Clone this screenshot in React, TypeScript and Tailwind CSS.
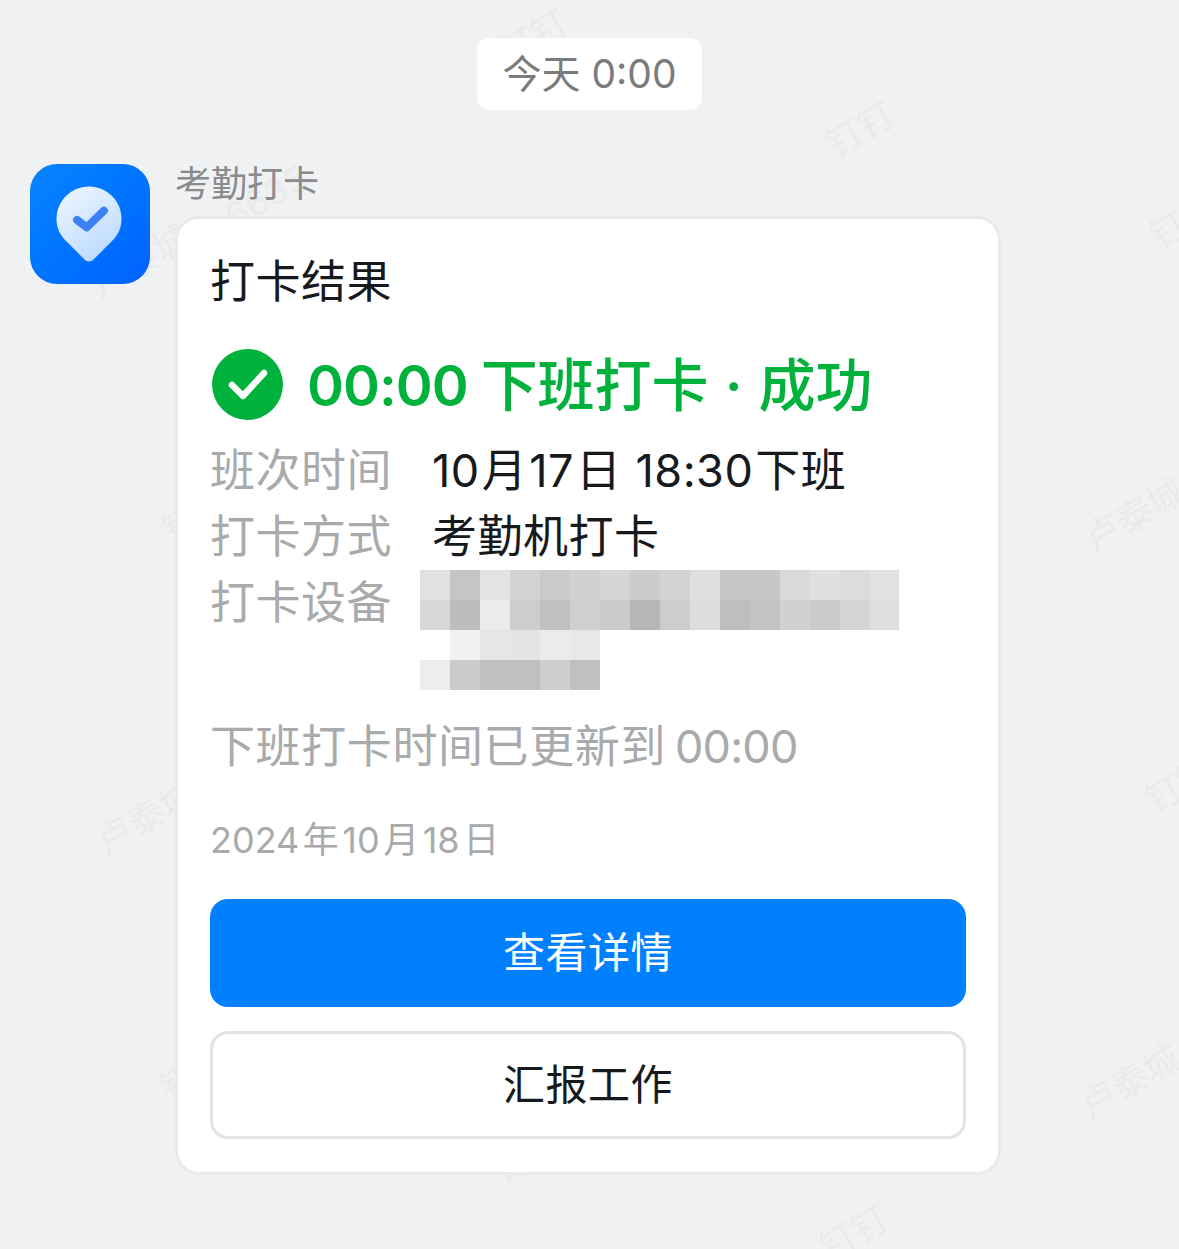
const watermarks = [
  { text: '钉钉', className: 'left-[497px] top-[12px]' },
  { text: '钉钉', className: 'left-[824px] top-[104px]' },
  { text: '钉钉', className: 'left-[1148px] top-[196px]' },
  { text: '卢泰城', className: 'left-[86px] top-[236px]' },
  { text: '6635', className: 'left-[222px] top-[172px]' },
  { text: '钉钉', className: 'left-[160px] top-[490px]' },
  { text: '卢泰城', className: 'left-[1080px] top-[490px]' },
  { text: '钉钉', className: 'left-[1143px] top-[760px]' },
  { text: '卢泰城', className: 'left-[92px] top-[792px]' },
  { text: '钉钉', className: 'left-[158px] top-[1048px]' },
  { text: '卢泰城', className: 'left-[1076px] top-[1056px]' },
  { text: '钉钉', className: 'left-[818px] top-[1208px]' },
  { text: '钉钉', className: 'left-[490px] top-[1130px]' },
];

const blurRows = [
  ['#e1e1e1', '#c4c6c5', '#e3e3e5', '#d3d3d5', '#c9cbc9', '#d1d1d3', '#d6d6d8', '#ccccce', '#d3d3d5', '#dfdfdf', '#c7c7c9', '#c7c7c9', '#d9d9db', '#e0e0e0', '#dbdddb', '#e1e1e3'],
  ['#d8d8da', '#bcbdbf', '#ebebed', '#cdcdcf', '#c0c0c2', '#cfd1d0', '#cbcbcd', '#b5b7b6', '#cdcdcf', '#dcdedd', '#bdbec0', '#c3c3c5', '#d1d1d3', '#cbcbcd', '#d5d5d7', '#dfdfdf'],
  ['#ffffff', '#f0f1f3', '#e5e7e6', '#e4e4e4', '#ebebeb', '#e8e8ea'],
  ['#eceeed', '#cacccb', '#c0c0c2', '#bfc0c2', '#cecece', '#bec0c2'],
];

function AppIcon() {
  return (
    <div className="h-[120px] w-[120px] shrink-0 rounded-[27px] bg-gradient-to-br from-[#0a84ff] to-[#0062ff] flex items-center justify-center">
      <svg width="120" height="120" viewBox="0 0 120 120">
        <defs>
          <linearGradient id="pin" x1="0.2" y1="0" x2="0.8" y2="1">
            <stop offset="0" stopColor="#ecf5ff" />
            <stop offset="1" stopColor="#b9d8ff" />
          </linearGradient>
        </defs>
        <path
          d="M59 22.5C77 22.5 91.5 37 91.5 55C91.5 64 88 71 82 77L63.5 95.5C61 98 57 98 54.500 95.500L36 77C30 71 26.500 64 26.500 55C26.500 37 41 22.500 59 22.500Z"
          fill="url(#pin)"
        />
        <path d="M47 56L56.700 63.300L74 46.700" fill="none" stroke="#3b80f5" strokeWidth="8" strokeLinecap="round" strokeLinejoin="round" />
      </svg>
    </div>
  );
}

function InfoRow({ label, children }: { label: string; children: React.ReactNode }) {
  return (
    <div className="flex h-[66px] items-center tracking-[0.5px]">
      <span className="w-[222px] text-[#a9aaac]">{label}</span>
      <span className="whitespace-nowrap">{children}</span>
    </div>
  );
}

export default function App() {
  return (
    <div className="relative h-[1249px] overflow-hidden bg-[#f0f1f3] pt-[38px] font-['Inter','Noto_Sans_CJK_SC',sans-serif] text-[#171a1d]">
      {watermarks.map((w) => (
        <span key={w.className} className={`absolute rotate-[-30deg] text-[36px] leading-[50px] whitespace-nowrap text-[#e9eaec] ${w.className}`}>
          {w.text}
        </span>
      ))}

      <div className="relative flex justify-center">
        <div className="flex h-[72px] w-[225px] items-center justify-center rounded-xl bg-white text-[39px] text-[#7a7b7c]">
          今天 0:00
        </div>
      </div>

      <div className="relative mt-[54px] flex pl-[30px]">
        <AppIcon />
        <div className="ml-[25px]">
          <div className="h-[52px] pt-px text-[36px] leading-[38px] text-[#8a8b8c]">考勤打卡</div>
          <div className="h-[959px] w-[826px] rounded-[24px] border-[3px] border-[#e9eaec] bg-white px-8 pt-[31px]">
            <div className="h-[64px] text-[45px] leading-[64px] tracking-[0.5px]">打卡结果</div>

            <div className="mt-[35px] flex h-[71px] items-center">
              <svg width="71" height="71" viewBox="0 0 71 71" className="ml-[2px] shrink-0">
                <circle cx="35.500" cy="35.500" r="35.500" fill="#00b23c" />
                <path d="M20 36L31 47L52 24" fill="none" stroke="#fff" strokeWidth="6.500" strokeLinecap="round" strokeLinejoin="round" />
              </svg>
              <span className="ml-[24px] pt-[3px] text-[56px] font-medium whitespace-nowrap text-[#00b23c]">
                <span className="font-semibold tracking-[-1px]">00:00</span>
                <span className="ml-[13px] text-[57px]">下班打卡</span>
                <span className="mx-[16px] font-semibold">·</span>
                <span className="text-[57px]">成功</span>
              </span>
            </div>

            <div className="mt-[18px] text-[45px]">
              <InfoRow label="班次时间">
                10<span className="ml-[2px]">月</span>
                <span className="ml-[2px]">17</span>
                <span className="ml-[2px]">日</span>
                <span className="ml-[14px]">18:30</span>
                <span className="ml-[2px]">下班</span>
              </InfoRow>
              <InfoRow label="打卡方式">考勤机打卡</InfoRow>
              <div className="flex tracking-[0.5px]">
                <span className="flex h-[66px] w-[210px] items-center text-[#a9aaac]">打卡设备</span>
                <div className="flex flex-col">
                  {blurRows.map((row, i) => (
                    <div key={i} className="flex h-[30px]">
                      {row.map((color, j) => (
                        <div key={j} className={j === 15 ? 'h-[30px] w-[29px]' : 'h-[30px] w-[30px]'} style={{ backgroundColor: color }} />
                      ))}
                    </div>
                  ))}
                </div>
              </div>
            </div>

            <div className="mt-[24px] h-[66px] text-[45px] leading-[66px] whitespace-nowrap text-[#a9aaac]">
              <span className="tracking-[0.6px]">下班打卡时间已更新到</span>
              <span className="ml-[9px] tracking-[-0.8px]">00:00</span>
            </div>
            <div className="mt-[35px] h-[50px] whitespace-nowrap text-[36px] leading-[50px] text-[#a9aaac]">
              2024<span className="ml-[3.5px]">年</span>
              <span className="ml-[3.5px]">10</span>
              <span className="ml-[3.5px]">月</span>
              <span className="ml-[3.5px]">18</span>
              <span className="ml-[3.5px]">日</span>
            </div>

            <button className="mt-[34px] flex h-[108px] w-[756px] items-center justify-center rounded-[18px] bg-[#0080ff] pb-[2px] text-[42px] tracking-[0.5px] text-white">
              查看详情
            </button>
            <button className="mt-[24px] flex h-[108px] w-[756px] items-center justify-center rounded-[18px] border-[3px] border-[#e2e3e5] bg-white pb-[2px] text-[42px] tracking-[0.5px]">
              汇报工作
            </button>
          </div>
        </div>
      </div>
    </div>
  );
}
